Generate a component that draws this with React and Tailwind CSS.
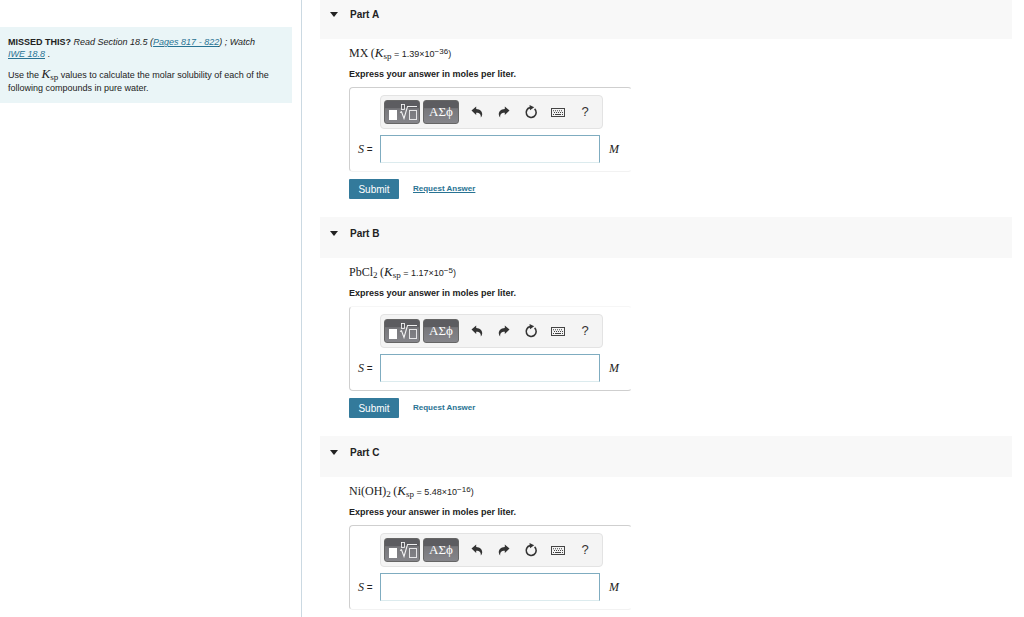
import React from "react";

const parts = [
  {
    id: "A",
    compound: "MX",
    value: "1.39×10",
    exponent: "−36",
    frame: "border-t-[#cfcfcf] border-b-[#f2f2f2]",
    link: "underline",
  },
  {
    id: "B",
    compound: <>PbCl<Sub>2</Sub></>,
    value: "1.17×10",
    exponent: "−5",
    frame: "border-t-[#f6f6f6] border-b-[#cfcfcf]",
    link: "",
  },
  {
    id: "C",
    compound: <>Ni(OH)<Sub>2</Sub></>,
    value: "5.48×10",
    exponent: "−16",
    frame: "border-t-[#cfcfcf] border-b-[#f2f2f2]",
    link: "underline",
  },
];

function Sub({ children }) {
  return <sub className="bottom-[-2px] text-[9px] leading-none not-italic">{children}</sub>;
}

function Ksp() {
  return (
    <span className="font-['Liberation_Serif',serif] text-[13px] leading-none">
      <i>K</i>
      <Sub>sp</Sub>
    </span>
  );
}

function TemplateIcon() {
  return (
    <svg viewBox="0 0 36 24" className="h-6 w-9 shrink-0" fill="none" stroke="#fff" aria-hidden="true">
      <rect x="5" y="10" width="8" height="10" fill="#fff" stroke="none" />
      <rect x="17.500" y="4.500" width="3" height="5" strokeWidth="0.800" />
      <path d="M16 12.500l1.500-.8L20 18.500l3.500-12H33" strokeWidth="1.100" strokeOpacity="0.9" />
      <rect x="25.500" y="10.500" width="7" height="9" strokeWidth="1" strokeOpacity="0.8" />
    </svg>
  );
}

function UndoIcon({ flip }) {
  return (
    <svg viewBox="0 0 12 12" className={flip ? "size-3 -scale-x-100" : "size-3"} aria-hidden="true">
      <path d="M.5 4.500L5.200.4v2.500c4 .2 6.200 2.500 6 5.500-.1 1.200-.6 2.200-1.400 3 .3-3-.9-4.700-4.600-4.700v2.400z" fill="#333" />
    </svg>
  );
}

function ResetIcon() {
  return (
    <svg viewBox="0 0 14 14" className="size-[14px]" fill="none" aria-hidden="true">
      <path d="M6 2.600a5 5 0 1 0 4.600 1.200" stroke="#333" strokeWidth="1.600" />
      <path d="M5.500 0l4.700 2.300-4.200 3z" fill="#333" />
    </svg>
  );
}

function KeyboardIcon() {
  return (
    <svg viewBox="0 0 14 10" className="mt-[2px] h-[10px] w-[14px]" fill="none" stroke="#444" aria-hidden="true">
      <rect x="0.5" y="0.5" width="13" height="8" strokeWidth="1" />
      <path d="M2 2.700h10M3 4.500h9" strokeDasharray="1 1" strokeWidth="1.100" />
      <path d="M2 6.500h1M4 6.500h6M11 6.500h1" strokeWidth="1" />
    </svg>
  );
}

const darkButton =
  "flex h-6 w-9 items-center justify-center overflow-hidden rounded-[3px] border border-[#666] bg-linear-to-b from-[#5c5c60] from-30% via-[#77777b] via-35% to-[#85858a] text-white";
const toolButton = "flex h-6 w-5 items-center justify-center text-[#333]";

function Toolbar() {
  return (
    <div role="toolbar" aria-label="Equation tools" className="flex h-[34px] w-[223px] items-center rounded border border-[#e3e3e3] bg-[#f4f4f4] pl-[3px]">
      <button type="button" aria-label="Templates" className={darkButton}>
        <TemplateIcon />
      </button>
      <button type="button" aria-label="Symbols" className={`${darkButton} ml-[3px] font-['Liberation_Serif',serif] text-[13px]`}>
        ΑΣϕ
      </button>
      <div className="ml-2 flex gap-[7px]">
        <button type="button" aria-label="Undo" className={toolButton}><UndoIcon /></button>
        <button type="button" aria-label="Redo" className={toolButton}><UndoIcon flip /></button>
        <button type="button" aria-label="Reset" className={toolButton}><ResetIcon /></button>
        <button type="button" aria-label="Keyboard shortcuts" className={toolButton}><KeyboardIcon /></button>
        <button type="button" aria-label="Help" className={`${toolButton} text-[13px]`}>?</button>
      </div>
    </div>
  );
}

function Part({ part }) {
  const inputId = `solubility-${part.id}`;
  return (
    <section>
      <h2 className="h-[41px] bg-[#f8f8f8] pt-2">
        <button type="button" aria-expanded="true" className="flex h-4 items-center pl-[10px] text-[10px] font-bold">
          <svg viewBox="0 0 8 5" className="mr-3 h-[5px] w-2" aria-hidden="true">
            <path d="M0 0h8L4 5z" fill="#222" />
          </svg>
          Part {part.id}
        </button>
      </h2>
      <div className="pt-1 pb-[18px] pl-[29px]">
        <p className="h-5 text-[9px] leading-5 whitespace-nowrap">
          <span className="font-['Liberation_Serif',serif] text-[12px]">{part.compound}</span>
          {" "}
          <span className="font-['Liberation_Serif',serif] text-[12px]">(</span>
          <Ksp /> = {part.value}
          <sup className="top-[-3px] text-[8px] leading-none">{part.exponent}</sup>)
        </p>
        <p className="h-6 text-[9px] leading-[22px] font-bold">Express your answer in moles per liter.</p>
        <div className={`w-[283px] max-w-full rounded border border-r-transparent border-l-[#cfcfcf] ${part.frame} pt-[7px] pb-2`}>
          <div className="pl-[30px]">
            <Toolbar />
          </div>
          <div className="mt-[6px] flex items-center">
            <label htmlFor={inputId} className="w-[30px] pl-2 text-[10px] whitespace-nowrap">
              <i className="font-['Liberation_Serif',serif] text-[12px]">S</i> =
            </label>
            <input
              id={inputId}
              type="text"
              className="h-7 w-[220px] border border-[#7facc0] border-b-[#dcebee] bg-white px-1 text-[12px] outline-none"
            />
            <i className="ml-[9px] font-['Liberation_Serif',serif] text-[12px]">M</i>
          </div>
        </div>
        <div className="mt-[7px] flex items-center gap-[14px]">
          <button type="submit" className="h-5 w-[50px] rounded-[1px] bg-[#337a9b] text-[10px] text-white">
            Submit
          </button>
          <a href="#request" className={`text-[8px] font-bold text-[#287393] ${part.link}`}>
            Request Answer
          </a>
        </div>
      </div>
    </section>
  );
}

export default function App() {
  return (
    <div className="flex h-screen overflow-hidden bg-white font-['Liberation_Sans',Arial,sans-serif] text-[#222]">
      <aside className="w-[302px] shrink-0 border-r border-[#cbd9e2] pt-[27px] pr-[9px]">
        <div className="bg-[#eaf5f7] px-2 pt-[9px] pb-2 text-[9px] leading-3">
          <p>
            <b>MISSED THIS?</b>{" "}
            <i>
              Read Section 18.5 (<a href="#pages" className="text-[#287393] underline">Pages 817 - 822</a>) ; Watch{" "}
              <a href="#iwe" className="whitespace-nowrap text-[#287393] underline">IWE 18.8</a>
            </i>{" "}
            .
          </p>
          <p className="mt-[7px] leading-[13px]">
            Use the <Ksp /> values to calculate the molar solubility of each of the following compounds in pure water.
          </p>
        </div>
      </aside>
      <main className="-mt-0.5 min-w-0 flex-1 pr-3 pl-[18px]">
        {parts.map((part) => (
          <Part key={part.id} part={part} />
        ))}
      </main>
    </div>
  );
}
